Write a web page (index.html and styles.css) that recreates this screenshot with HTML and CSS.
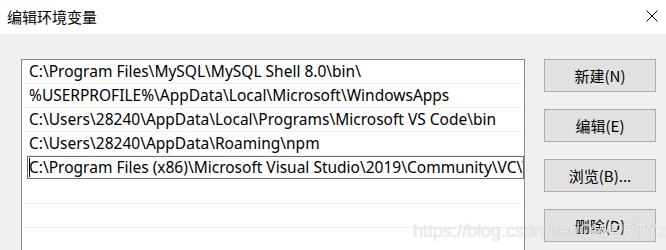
FILE: index.html
```html
<!DOCTYPE html>
<html>
<head>
<meta charset="utf-8">
<title>编辑环境变量</title>
<link rel="stylesheet" href="styles.css">
</head>
<body>
<div class="dialog">
  <div class="titlebar">
    <span class="title">编辑环境变量</span>
    <span class="close">
      <svg width="12" height="12" viewBox="0 0 12 12"><path d="M0.5 0.5L11.5 11.5M11.5 0.5L0.5 11.5" stroke="#000" stroke-width="1" fill="none"/></svg>
    </span>
  </div>
  <div class="body">
    <div class="list">
      <div class="row">C:\Program Files\MySQL\MySQL Shell 8.0\bin\</div>
      <div class="row">%USERPROFILE%\AppData\Local\Microsoft\WindowsApps</div>
      <div class="row">C:\Users\28240\AppData\Local\Programs\Microsoft VS Code\bin</div>
      <div class="row">C:\Users\28240\AppData\Roaming\npm</div>
      <div class="row editing"><div class="edit"><span class="caret"></span>C:\Program Files (x86)\Microsoft Visual Studio\2019\Community\VC\Tools</div></div>
      <div class="row"></div>
      <div class="row"></div>
      <div class="row"></div>
    </div>
    <div class="buttons">
      <div class="btn">新建(N)</div>
      <div class="btn">编辑(E)</div>
      <div class="btn">浏览(B)...</div>
      <div class="btn">删除(D)</div>
    </div>
  </div>
  <div class="watermark">https://blog.csdn.net/QWERTYzxw</div>
</div>
</body>
</html>
```

FILE: styles.css
```css
html, body{
margin:0;
padding:0;
}
body{
width:666px;
height:250px;
overflow:hidden;
background:#f0f0f0;
font-family:"Noto Sans","Noto Sans CJK SC",sans-serif;
font-size:15.5px;
color:#000;
}
.dialog{
position:relative;
height:250px;
}
.titlebar{
height:34px;
background:#fff;
display:flex;
align-items:center;
justify-content:space-between;
padding:0 8px 0 7px;
}
.title{
font-family:"Noto Sans CJK SC",sans-serif;
font-size:15px;
margin-top:-1px;
}
.close{
display:flex;
margin-top:-2px;
}
.body{
display:flex;
padding:25px 0 0 21px;
}
.list{
width:502px;
height:200px;
border:1px solid #828790;
border-bottom:none;
background:#fff;
}
.row{
height:23px;
line-height:23px;
border-bottom:1px solid #f0f0f0;
padding-left:7px;
white-space:nowrap;
overflow:hidden;
}
.row.editing{
padding:0 0 0 5px;
border-bottom-color:#fff;
}
.edit{
height:21px;
line-height:21px;
border:1px solid #6e6e6e;
padding-left:1px;
white-space:nowrap;
overflow:hidden;
}
.caret{
display:inline-block;
width:1px;
height:19px;
background:#000;
vertical-align:middle;
margin-right:-1px;
margin-top:-2px;
}
.buttons{
display:flex;
flex-direction:column;
gap:17px;
margin-left:19px;
}
.btn{
width:110px;
height:31px;
line-height:31px;
border:1px solid #adadad;
background:#e1e1e1;
text-align:center;
font-family:"Noto Sans CJK SC",sans-serif;
font-size:15px;
}
.watermark{
position:absolute;
left:413px;
top:221px;
font-family:"Liberation Sans",Arial,sans-serif;
font-size:18px;
color:rgba(255,255,255,0.8);
text-shadow:0 0 1px rgba(0,0,0,0.3);
white-space:nowrap;
}
```
